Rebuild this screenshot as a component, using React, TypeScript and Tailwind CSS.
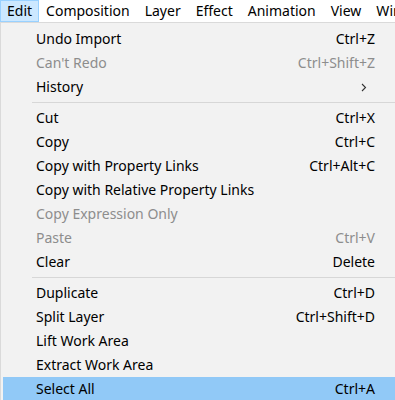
type Item = { label: string; shortcut?: string; disabled?: boolean; sub?: boolean; active?: boolean };

const groups: Item[][] = [
  [
    { label: "Undo Import", shortcut: "Ctrl+Z" },
    { label: "Can't Redo", shortcut: "Ctrl+Shift+Z", disabled: true },
    { label: "History", sub: true },
  ],
  [
    { label: "Cut", shortcut: "Ctrl+X" },
    { label: "Copy", shortcut: "Ctrl+C" },
    { label: "Copy with Property Links", shortcut: "Ctrl+Alt+C" },
    { label: "Copy with Relative Property Links" },
    { label: "Copy Expression Only", disabled: true },
    { label: "Paste", shortcut: "Ctrl+V", disabled: true },
    { label: "Clear", shortcut: "Delete" },
  ],
  [
    { label: "Duplicate", shortcut: "Ctrl+D" },
    { label: "Split Layer", shortcut: "Ctrl+Shift+D" },
    { label: "Lift Work Area" },
    { label: "Extract Work Area" },
    { label: "Select All", shortcut: "Ctrl+A", active: true },
  ],
];

const menus = ["Edit", "Composition", "Layer", "Effect", "Animation", "View", "Window"];

function MenuRow({ item }: { item: Item }) {
  const color = item.disabled ? "text-[#8d8d8d]" : "text-black";
  return (
    <div
      className={`flex h-6 items-center pl-[35px] pr-5 ${color} ${item.active ? "ml-[2px] bg-[#91c9f7]" : ""}`}>
      <span className={`grow ${item.active ? "-ml-[2px]" : ""}`}>{item.label}</span>
      {item.shortcut && <span>{item.shortcut}</span>}
      {item.sub && (
        <svg width="6" height="9" viewBox="0 0 6 9" className="mr-[8px]">
          <path d="M1 1l3.5 3.5L1 8" fill="none" stroke="#333" strokeWidth="1.1" />
        </svg>
      )}
    </div>
  );
}

export default function App() {
  return (
    <div className="h-[400px] w-[395px] overflow-hidden bg-[#f2f2f2] font-['Noto_Sans',sans-serif] text-[14px] leading-none">
      <div className="flex h-[22px] items-stretch whitespace-nowrap bg-white text-black">
        {menus.map((m) => (
          <div
            key={m}
            className={`flex items-center border ${m === "Edit" ? "border-[#99d1ff] bg-[#cce8ff] px-[6px]" : "border-transparent pl-[6px] pr-[7px]"}`}>
            {m}
          </div>
        ))}
      </div>
      <div className="border-t border-l border-[#dadada] pt-1">
        {groups.map((g, i) => (
          <div key={i}>
            {i > 0 && <div className="my-[3px] ml-[31px] h-px bg-[#d7d7d7]" />}
            {g.map((item) => (
              <MenuRow key={item.label} item={item} />
            ))}
          </div>
        ))}
      </div>
    </div>
  );
}
